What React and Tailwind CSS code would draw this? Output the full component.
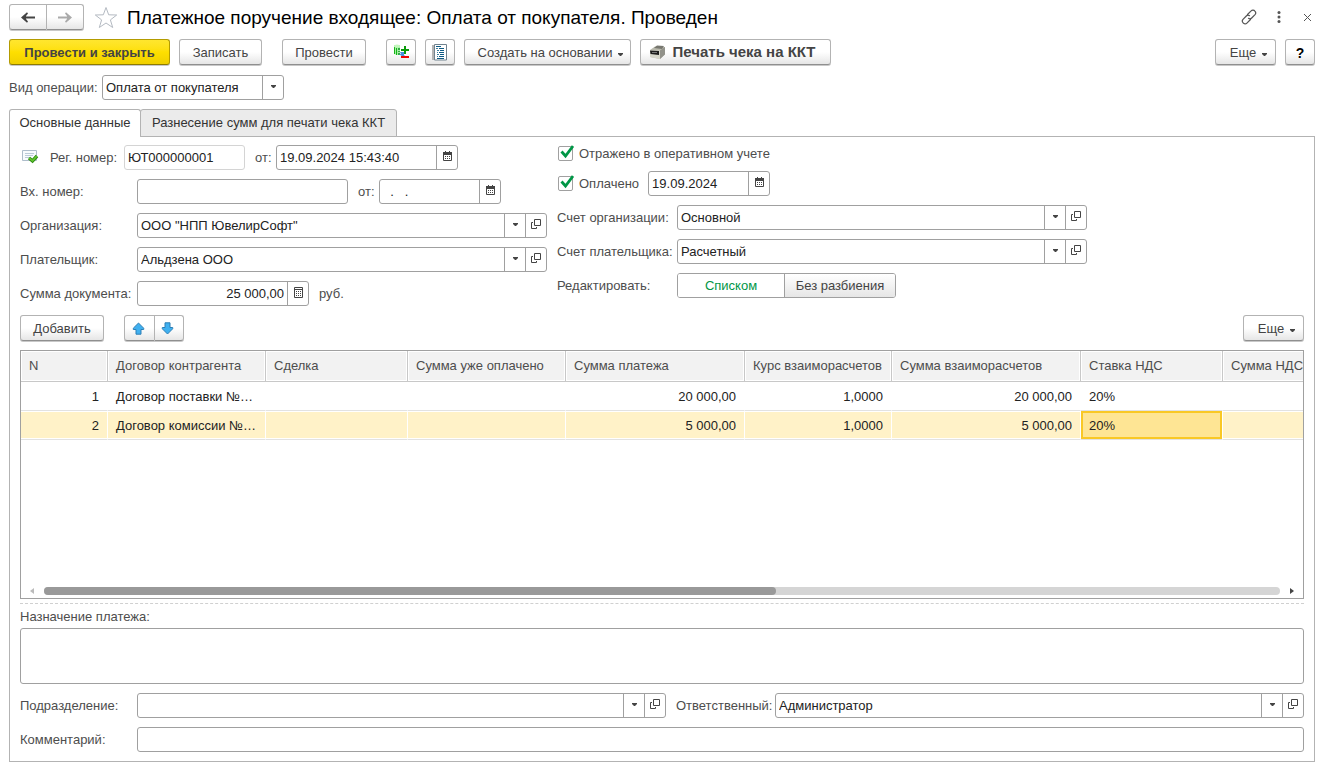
import { useState } from 'react';

const BUTTON =
  'flex h-[26px] items-center justify-center rounded-[3px] border border-[#b3b3b3] border-b-[#8f8f8f] bg-linear-to-b from-white from-50% to-[#e6e6e6] text-[#444] shadow-[0_1px_0_#c8c8c8] whitespace-nowrap';
const BOX = 'flex h-[25px] min-w-0 rounded-[3px] border border-[#a0a0a0] bg-white';
const INPUT = 'min-w-0 flex-1 appearance-none bg-transparent px-[3px] text-[#222] outline-none';
const CELL = 'flex w-[21px] shrink-0 items-center justify-center border-l border-[#a0a0a0] pb-[3px]';

const COLUMNS = [
  { title: 'N', width: 'w-[87px]', align: 'text-right' },
  { title: 'Договор контрагента', width: 'w-[158px]' },
  { title: 'Сделка', width: 'w-[142px]' },
  { title: 'Сумма уже оплачено', width: 'w-[158px]', align: 'text-right' },
  { title: 'Сумма платежа', width: 'w-[179px]', align: 'text-right' },
  { title: 'Курс взаиморасчетов', width: 'w-[147px]', align: 'text-right' },
  { title: 'Сумма взаиморасчетов', width: 'w-[189px]', align: 'text-right' },
  { title: 'Ставка НДС', width: 'w-[142px]' },
  { title: 'Сумма НДС', width: 'w-[158px]', align: 'text-right' },
];

const ROWS = [
  ['1', 'Договор поставки №…', '', '', '20 000,00', '1,0000', '20 000,00', '20%', ''],
  ['2', 'Договор комиссии №…', '', '', '5 000,00', '1,0000', '5 000,00', '20%', ''],
];

function Caret({ className = '' }) {
  return (
    <svg width="5" height="3" viewBox="0 0 5 3" className={className} aria-hidden="true">
      <path d="M0 0h5v1L3 3H2L0 1z" fill="#444" />
    </svg>
  );
}

function OpenIcon() {
  return (
    <svg width="10" height="10" viewBox="0 0 10 10" fill="none" stroke="#444" aria-hidden="true">
      <path d="M3.5.5h6v6h-6z" />
      <path d="M2 3.5H.5v6h5V8" />
    </svg>
  );
}

function CalendarIcon() {
  return (
    <svg width="9" height="10" viewBox="0 0 9 10" aria-hidden="true">
      <path d="M.5 1.5h8v8h-8z" fill="none" stroke="#444" />
      <path d="M0 1h9v3H0zM2 0h1v1H2zM6 0h1v1H6z" fill="#444" />
      <path d="M2 5h1v1H2zM4 5h1v1H4zM6 5h1v1H6zM2 7h1v1H2zM4 7h1v1H4zM6 7h1v1H6z" fill="#444" />
    </svg>
  );
}

function CalcIcon() {
  return (
    <svg width="9" height="11" viewBox="0 0 9 11" aria-hidden="true">
      <path d="M.5.5h8v10h-8z" fill="none" stroke="#444" />
      <path d="M1 2h7v1H1z" fill="#444" />
      <path d="M2 4h1v1H2zM4 4h1v1H4zM6 4h1v1H6zM2 6h1v1H2zM4 6h1v1H4zM6 6h1v1H6zM2 8h1v1H2zM4 8h1v1H4zM6 8h1v1H6z" fill="#444" />
    </svg>
  );
}

function NavArrow({ color, flip }) {
  return (
    <svg width="14" height="11" viewBox="0 0 14 11" className={flip ? 'rotate-180' : ''} aria-hidden="true">
      <path d="M14 4.500v2H5V7l2 2.500-1 1.200L0 5.500 6 .3l1 1.200L5 4v.5z" fill={color} />
    </svg>
  );
}

function MoveArrow({ down }) {
  return (
    <svg width="13" height="13" viewBox="0 0 13 13" className={down ? 'rotate-180' : ''} aria-hidden="true">
      <path d="M6.5 1l5.200 5.200v1.300H9v4.700H4V7.500H1.300V6.200z" fill="#3fb0f0" stroke="#2d7fb5" />
    </svg>
  );
}

function MovementsIcon() {
  return (
    <svg width="17" height="16" viewBox="0 0 17 16" aria-hidden="true">
      <path d="M1 1h6v9L4 11l-3-1z" fill="#a6eda6" />
      <path d="M1 3h1v7H1zM3 4h1v7H3z" fill="#16b516" />
      <path d="M5 4h2v2H5zM5 7h2v1H5zM5 9h2v2H5z" fill="#2fae3f" />
      <ellipse cx="4" cy="2" rx="3" ry="1.5" fill="#c4f7bd" />
      <path d="M7 8h4v3l1 1-2 1-4-3h2z" fill="#4a8fdc" />
      <path d="M11 2h2v3h3v2h-3v3h-2V7H8V5h3z" fill="#0a9a0a" />
      <path d="M8 12h8v2H8z" fill="#f00000" />
    </svg>
  );
}

function JournalIcon() {
  return (
    <svg width="16" height="17" viewBox="0 0 16 17" aria-hidden="true">
      <path d="M0 1h2v15H0z" fill="#b5b5b5" />
      <path d="M2.500.5h12v15.500h-12z" fill="#fff" stroke="#70828e" />
      <path d="M4 2h5v1H4zM7 4h5v1H7zM8 6h4v1H8zM7 8h5v1H7zM8 10h4v1H8zM7 12h5v1H7zM5 14h7v1H5z" fill="#0f5b85" />
      <path d="M4 4h2v1H4zM5 6h2v1H5zM5 8h1v1H5zM5 10h2v1H5zM5 12h1v1H5z" fill="#3e7f9f" />
    </svg>
  );
}

function PrinterIcon() {
  return (
    <svg width="17" height="15" viewBox="0 0 17 15" aria-hidden="true">
      <path d="M1 5l5-3.500L16 2v7l-5 5-10-2z" fill="#b9b9ac" />
      <path d="M5 3l3-2.500 7 .5-2 3z" fill="#77776f" />
      <path d="M1 5l10 .5V14L1 12z" fill="#d6d6ca" />
      <path d="M11 5.500L16 2v7.500L11 14z" fill="#92928a" />
      <path d="M1 5.500l9 .5v4L1.500 9z" fill="#1c1c1c" />
      <path d="M3 7h5v1H3z" fill="#777" />
    </svg>
  );
}

function PostedIcon() {
  return (
    <svg width="17" height="15" viewBox="0 0 17 15" className="mb-[3px] ml-0.5" aria-hidden="true">
      <path d="M.5 1.500h14v10H.5z" fill="#f8fbfd" stroke="#aebdcb" />
      <path d="M3 4h9v1H3zM3 6h8v1H3zM3 8h5v1H3z" fill="#bccbd8" />
      <path d="M7 9l3.500 3L15 7" fill="none" stroke="#2c8a12" strokeWidth="3.400" />
      <path d="M7.300 9.200l3.200 2.600 4.200-4.700" fill="none" stroke="#63c72d" strokeWidth="1.600" />
    </svg>
  );
}

function Label({ htmlFor, className = '', children }) {
  return (
    <label htmlFor={htmlFor} className={`shrink-0 whitespace-nowrap text-[#4d4d4d] ${className}`}>
      {children}
    </label>
  );
}

function Combo({ id, value = '', open = true, className = 'flex-1' }) {
  return (
    <div className={`${BOX} ${className}`}>
      <div className="relative flex min-w-0 flex-1">
        <select id={id} defaultValue={value} className={`${INPUT} pr-6`}>
          <option>{value}</option>
        </select>
        <span className={`${CELL} pointer-events-none absolute inset-y-0 right-0`}>
          <Caret />
        </span>
      </div>
      {open && (
        <button type="button" aria-label="Открыть" className={CELL}>
          <OpenIcon />
        </button>
      )}
    </div>
  );
}

function DateField({ id, value, className }) {
  return (
    <div className={`${BOX} ${className}`}>
      <input id={id} defaultValue={value} className={INPUT} />
      <button type="button" aria-label="Выбрать дату" className={CELL}>
        <CalendarIcon />
      </button>
    </div>
  );
}

function Check({ id, children }) {
  return (
    <div className="ml-px flex items-center gap-[6px]">
      <span className="relative flex">
        <input
          id={id}
          type="checkbox"
          defaultChecked
          className="peer size-[15px] appearance-none rounded-[2px] border border-[#a0a0a0] bg-white"
        />
        <svg
          width="14"
          height="14"
          viewBox="0 0 14 14"
          className="pointer-events-none absolute -top-px left-0.5 hidden peer-checked:block"
          aria-hidden="true"
        >
          <path d="M1.500 6.500l4 4.500L13 1" fill="none" stroke="#009646" strokeWidth="2.800" />
        </svg>
      </span>
      <Label htmlFor={id}>{children}</Label>
    </div>
  );
}

function MoreButton() {
  return (
    <button type="button" className={`${BUTTON} w-[61px] gap-[6px] pt-0.5 pl-[6px]`}>
      Еще
      <Caret className="mt-0.5" />
    </button>
  );
}

function TitleBar() {
  return (
    <header className="flex h-6 items-center">
      <div className="flex">
        <button type="button" aria-label="Назад" className={`${BUTTON} h-6 w-[38px] rounded-r-none`}>
          <NavArrow color="#444" />
        </button>
        <button type="button" aria-label="Вперед" className={`${BUTTON} h-6 w-[37px] rounded-l-none border-l-0`}>
          <NavArrow color="#aaa" flip />
        </button>
      </div>
      <button type="button" aria-label="Избранное" className="ml-[10px]">
        <svg width="24" height="23" viewBox="0 0 24 23" fill="none" stroke="#b4bac2" aria-hidden="true">
          <path d="M12 1.500l2.700 7.300 8 .2-6.300 4.900 2.300 7.600-6.700-4.500-6.700 4.500 2.300-7.600L1.300 9l8-.2z" />
        </svg>
      </button>
      <h1 className="ml-[9px] flex-1 truncate pt-0.5 text-[19px] leading-6 text-black">
        Платежное поручение входящее: Оплата от покупателя. Проведен
      </h1>
      <div className="flex items-center gap-[18px] pr-[3px]">
        <button type="button" aria-label="Получить ссылку" className="mr-0.5">
          <svg width="16" height="16" viewBox="0 0 16 16" fill="none" stroke="#555" strokeWidth="1.200" strokeLinecap="round" aria-hidden="true">
            <path d="M6.500 5.500l3.600-3.600a2.500 2.500 0 0 1 3.800.2 2.600 2.600 0 0 1 .1 3.500L10.700 9a2.500 2.500 0 0 1-3.200.3" />
            <path d="M9.500 10.500l-3.600 3.600a2.500 2.500 0 0 1-3.800-.2 2.600 2.600 0 0 1-.1-3.500L5.300 7a2.500 2.500 0 0 1 3.200-.3" />
          </svg>
        </button>
        <button type="button" aria-label="Меню">
          <svg width="4" height="12" viewBox="0 0 4 12" fill="#555" aria-hidden="true">
            <circle cx="2" cy="1.500" r="1.500" />
            <circle cx="2" cy="6" r="1.500" />
            <circle cx="2" cy="10.500" r="1.500" />
          </svg>
        </button>
        <button type="button" aria-label="Закрыть" className="ml-1">
          <svg width="9" height="9" viewBox="0 0 9 9" stroke="#555" aria-hidden="true">
            <path d="M1 1l7 7M8 1L1 8" />
          </svg>
        </button>
      </div>
    </header>
  );
}

function CommandBar() {
  return (
    <div className="mt-[10px] flex items-center">
      <button
        type="button"
        className="h-[26px] w-[161px] rounded-[3px] border border-[#b39b00] border-b-[#8f7c00] bg-linear-to-b from-[#ffe62e] via-[#fedf00] to-[#f0d000] pt-0.5 font-bold text-[#444] shadow-[0_1px_0_#c8c8c8]"
      >
        Провести и закрыть
      </button>
      <button type="button" className={`${BUTTON} ml-[9px] w-[83px] pt-0.5`}>Записать</button>
      <button type="button" className={`${BUTTON} ml-5 w-[84px] pt-0.5`}>Провести</button>
      <button type="button" aria-label="Движения документа" className={`${BUTTON} ml-5 w-[30px]`}>
        <MovementsIcon />
      </button>
      <button type="button" aria-label="Журнал" className={`${BUTTON} ml-[9px] w-[30px]`}>
        <JournalIcon />
      </button>
      <button type="button" className={`${BUTTON} ml-[9px] w-[167px] gap-[6px] pt-0.5 pl-[6px]`}>
        Создать на основании
        <Caret className="mt-0.5" />
      </button>
      <button type="button" className={`${BUTTON} ml-[9px] w-[191px] gap-[6px] pr-[6px] text-[15px] font-bold`}>
        <PrinterIcon />
        Печать чека на ККТ
      </button>
      <div className="ml-auto flex gap-[9px]">
        <MoreButton />
        <button type="button" className={`${BUTTON} w-[30px] pt-0.5 text-sm font-bold text-black`}>?</button>
      </div>
    </div>
  );
}

function DocumentFields() {
  const [mode, setMode] = useState('list');

  return (
    <div className="grid max-w-[1067px] grid-cols-[527fr_530fr] gap-x-[10px]">
      <div className="flex flex-col gap-[9px]">
        <div className="flex items-center">
          <PostedIcon />
          <Label htmlFor="reg" className="ml-[11px] w-[74px]">Рег. номер:</Label>
          <input
            id="reg"
            readOnly
            defaultValue="ЮТ000000001"
            className="h-[25px] w-[121px] rounded-[3px] border border-[#d4d4d4] px-[3px] text-[#222] outline-none"
          />
          <Label htmlFor="reg-date" className="ml-[10px] w-[21px]">от:</Label>
          <DateField id="reg-date" value="19.09.2024 15:43:40" className="w-[182px]" />
        </div>
        <div className="flex items-center">
          <Label htmlFor="in-number" className="w-[117px]">Вх. номер:</Label>
          <div className={`${BOX} w-[211px]`}>
            <input id="in-number" className={INPUT} />
          </div>
          <Label htmlFor="in-date" className="ml-[10px] w-[21px]">от:</Label>
          <DateField id="in-date" value="  .   ." className="w-[122px]" />
        </div>
        <div className="flex items-center">
          <Label htmlFor="org" className="w-[117px]">Организация:</Label>
          <Combo id="org" value={'ООО "НПП ЮвелирСофт"'} />
        </div>
        <div className="flex items-center">
          <Label htmlFor="payer" className="w-[117px]">Плательщик:</Label>
          <Combo id="payer" value="Альдзена ООО" />
        </div>
        <div className="flex items-center">
          <Label htmlFor="total" className="w-[117px]">Сумма документа:</Label>
          <div className={`${BOX} w-[172px]`}>
            <input id="total" defaultValue="25 000,00" className={`${INPUT} text-right`} />
            <button type="button" aria-label="Калькулятор" className={CELL}>
              <CalcIcon />
            </button>
          </div>
          <span className="ml-[10px] text-[#4d4d4d]">руб.</span>
        </div>
      </div>

      <div className="flex flex-col gap-[9px]">
        <div className="flex h-[17px] items-center">
          <Check id="reflected">Отражено в оперативном учете</Check>
        </div>
        <div className="flex items-center gap-[9px]">
          <Check id="paid">Оплачено</Check>
          <DateField id="paid-date" value="19.09.2024" className="w-[122px]" />
        </div>
        <div className="flex items-center">
          <Label htmlFor="org-account" className="w-[120px]">Счет организации:</Label>
          <Combo id="org-account" value="Основной" />
        </div>
        <div className="flex items-center">
          <Label htmlFor="payer-account" className="w-[120px]">Счет плательщика:</Label>
          <Combo id="payer-account" value="Расчетный" />
        </div>
        <div className="flex items-center">
          <span className="w-[120px] text-[#4d4d4d]">Редактировать:</span>
          <div className="flex h-[25px] overflow-hidden rounded-[3px] border border-[#a0a0a0]">
            <button
              type="button"
              onClick={() => setMode('list')}
              className={`w-[106px] ${mode === 'list' ? 'bg-white text-[#009646]' : 'bg-linear-to-b from-white to-[#e6e6e6] text-[#444]'}`}
            >
              Списком
            </button>
            <button
              type="button"
              onClick={() => setMode('single')}
              className={`w-[111px] border-l border-[#a0a0a0] ${mode === 'single' ? 'bg-white text-[#009646]' : 'bg-linear-to-b from-white to-[#e6e6e6] text-[#444]'}`}
            >
              Без разбиения
            </button>
          </div>
        </div>
      </div>
    </div>
  );
}

function PaymentsTable() {
  const [selected, setSelected] = useState({ row: 1, col: 7 });

  return (
    <div className="mt-[9px] flex h-[249px] flex-col border border-[#a0a0a0]">
      <div className="flex-1 overflow-hidden">
        <table className="w-full min-w-[1360px] table-fixed border-separate border-spacing-0">
          <thead>
            <tr>
              {COLUMNS.map((c) => (
                <th
                  key={c.title}
                  className={`${c.width} h-[31px] border-r border-b border-[#c8c8c8] bg-[#f2f2f2] px-2 text-left font-normal whitespace-nowrap text-[#4d4d4d] shadow-[inset_0_0_0_1px_#fff]`}
                >
                  {c.title}
                </th>
              ))}
            </tr>
          </thead>
          <tbody>
            {ROWS.map((row, r) => (
              <tr key={row[0]} className={selected.row === r ? 'bg-[#fff2c8]' : 'bg-white'}>
                {row.map((value, c) => (
                  <td
                    key={COLUMNS[c].title}
                    onClick={() => setSelected({ row: r, col: c })}
                    className={`h-[29px] border-r border-b border-r-white border-b-[#e2e2e2] px-2 pt-0.5 whitespace-nowrap text-[#222] ${COLUMNS[c].align ?? ''} ${
                      selected.row === r && selected.col === c
                        ? 'bg-[#fee594] shadow-[inset_0_0_0_2px_#f9c825]'
                        : 'shadow-[inset_0_1px_0_#fff,inset_0_-1px_0_#fff]'
                    }`}
                  >
                    {value}
                  </td>
                ))}
              </tr>
            ))}
          </tbody>
        </table>
      </div>
      <div className="flex h-[15px] items-center gap-[10px] px-[9px]">
        <svg width="4" height="6" viewBox="0 0 4 6" aria-hidden="true">
          <path d="M4 0v6L0 3z" fill="#bbb" />
        </svg>
        <div className="h-2 flex-1 rounded-full bg-[#d5d5d5]">
          <div className="h-2 w-[59.2%] rounded-full bg-[#999]" />
        </div>
        <svg width="4" height="6" viewBox="0 0 4 6" aria-hidden="true">
          <path d="M0 0v6l4-3z" fill="#444" />
        </svg>
      </div>
    </div>
  );
}

export default function App() {
  return (
    <div className="min-h-screen bg-white pt-[5px] pr-[7px] pb-1 pl-[9px] font-['Liberation_Sans',Arial,sans-serif] text-[13px] leading-4">
      <TitleBar />
      <CommandBar />

      <div className="mt-[10px] flex items-center">
        <Label htmlFor="operation" className="w-[93px]">Вид операции:</Label>
        <Combo id="operation" value="Оплата от покупателя" open={false} className="w-[182px]" />
      </div>

      <div role="tablist" className="relative -mb-px mt-[9px] flex">
        <button
          type="button"
          role="tab"
          aria-selected="true"
          className="h-7 w-[132px] rounded-t-[3px] border border-b-0 border-[#b3b3b3] bg-white pb-px text-[#333]"
        >
          Основные данные
        </button>
        <button
          type="button"
          role="tab"
          aria-selected="false"
          className="-ml-px h-7 w-[257px] rounded-t-[3px] border border-[#b3b3b3] bg-[#ebebeb] text-[#333]"
        >
          Разнесение сумм для печати чека ККТ
        </button>
      </div>

      <main className="border border-[#b3b3b3] px-[10px] pt-2 pb-[9px]">
        <DocumentFields />

        <div className="mt-[9px] flex items-center">
          <button type="button" className={`${BUTTON} w-[84px] pt-0.5`}>Добавить</button>
          <div className="ml-5 flex">
            <button type="button" aria-label="Переместить вверх" className={`${BUTTON} w-[31px] rounded-r-none pr-0.5`}>
              <MoveArrow />
            </button>
            <button type="button" aria-label="Переместить вниз" className={`${BUTTON} w-[29px] rounded-l-none border-l-0 pr-[3px]`}>
              <MoveArrow down />
            </button>
          </div>
          <div className="ml-auto">
            <MoreButton />
          </div>
        </div>

        <PaymentsTable />

        <div className="mt-1 border-t border-dashed border-[#d0d0d0]" />

        <div className="mt-[5px] flex flex-col">
          <Label htmlFor="purpose">Назначение платежа:</Label>
          <textarea
            id="purpose"
            className="mt-[3px] h-14 resize-none rounded-[3px] border border-[#a0a0a0] px-[3px] text-[#222] outline-none"
          />
        </div>

        <div className="mt-[9px] flex items-center">
          <Label htmlFor="department" className="w-[117px]">Подразделение:</Label>
          <Combo id="department" />
          <Label htmlFor="responsible" className="ml-[10px] w-[99px]">Ответственный:</Label>
          <Combo id="responsible" value="Администратор" />
        </div>
        <div className="mt-[9px] flex items-center">
          <Label htmlFor="comment" className="w-[117px]">Комментарий:</Label>
          <div className={`${BOX} flex-1`}>
            <input id="comment" className={INPUT} />
          </div>
        </div>
      </main>
    </div>
  );
}
